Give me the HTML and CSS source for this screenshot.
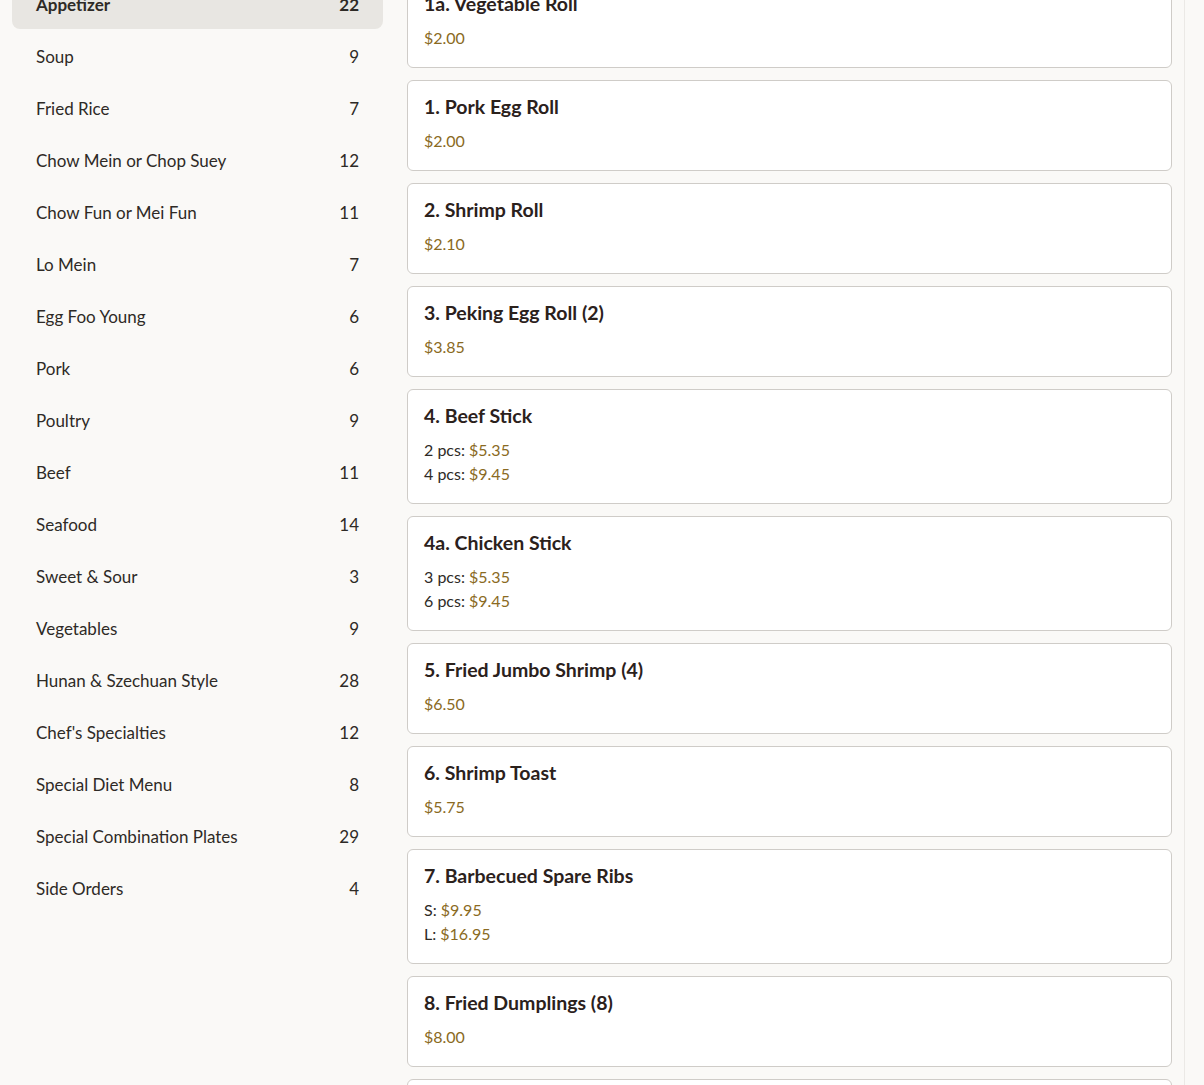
FILE: index.html
```
<!DOCTYPE html>
<html>
<head>
<meta charset="utf-8">
<link rel="stylesheet" href="styles.css">
</head>
<body>
<div class="page">
  <aside class="sidebar">
    <div class="cat active"><span>Appetizer</span><span>22</span></div>
    <div class="cat"><span>Soup</span><span>9</span></div>
    <div class="cat"><span>Fried Rice</span><span>7</span></div>
    <div class="cat"><span>Chow Mein or Chop Suey</span><span>12</span></div>
    <div class="cat"><span>Chow Fun or Mei Fun</span><span>11</span></div>
    <div class="cat"><span>Lo Mein</span><span>7</span></div>
    <div class="cat"><span>Egg Foo Young</span><span>6</span></div>
    <div class="cat"><span>Pork</span><span>6</span></div>
    <div class="cat"><span>Poultry</span><span>9</span></div>
    <div class="cat"><span>Beef</span><span>11</span></div>
    <div class="cat"><span>Seafood</span><span>14</span></div>
    <div class="cat"><span>Sweet &amp; Sour</span><span>3</span></div>
    <div class="cat"><span>Vegetables</span><span>9</span></div>
    <div class="cat"><span>Hunan &amp; Szechuan Style</span><span>28</span></div>
    <div class="cat"><span>Chef's Specialties</span><span>12</span></div>
    <div class="cat"><span>Special Diet Menu</span><span>8</span></div>
    <div class="cat"><span>Special Combination Plates</span><span>29</span></div>
    <div class="cat"><span>Side Orders</span><span>4</span></div>
  </aside>
  <main class="items">
    <div class="card"><div class="title">1a. Vegetable Roll</div><div class="line"><span class="price">$2.00</span></div></div>
    <div class="card"><div class="title">1. Pork Egg Roll</div><div class="line"><span class="price">$2.00</span></div></div>
    <div class="card"><div class="title">2. Shrimp Roll</div><div class="line"><span class="price">$2.10</span></div></div>
    <div class="card"><div class="title">3. Peking Egg Roll (2)</div><div class="line"><span class="price">$3.85</span></div></div>
    <div class="card"><div class="title">4. Beef Stick</div><div class="line">2 pcs: <span class="price">$5.35</span></div><div class="line">4 pcs: <span class="price">$9.45</span></div></div>
    <div class="card"><div class="title">4a. Chicken Stick</div><div class="line">3 pcs: <span class="price">$5.35</span></div><div class="line">6 pcs: <span class="price">$9.45</span></div></div>
    <div class="card"><div class="title">5. Fried Jumbo Shrimp (4)</div><div class="line"><span class="price">$6.50</span></div></div>
    <div class="card"><div class="title">6. Shrimp Toast</div><div class="line"><span class="price">$5.75</span></div></div>
    <div class="card"><div class="title">7. Barbecued Spare Ribs</div><div class="line">S: <span class="price">$9.95</span></div><div class="line">L: <span class="price">$16.95</span></div></div>
    <div class="card"><div class="title">8. Fried Dumplings (8)</div><div class="line"><span class="price">$8.00</span></div></div>
    <div class="card"><div class="title">9. Steamed Dumplings (8)</div><div class="line"><span class="price">$8.00</span></div></div>
  </main>
</div>
</body>
</html>
```
FILE: styles.css
```
html, body {
  margin: 0;
  padding: 0;
  background: #faf9f7;
  overflow: hidden;
}
body {
  font-family: "Lato", "Open Sans", sans-serif;
  color: #2b2520;
}
.page {
  display: flex;
  align-items: flex-start;
  gap: 24px;
  padding: 0 12px;
  margin-top: -23px;
  border-right: 1px solid #ebe9e6;
  box-sizing: content-box;
  width: 1160px;
  min-height: 1200px;
}
.sidebar {
  width: 371px;
  flex: none;
}
.cat {
  display: flex;
  justify-content: space-between;
  padding: 16px 24px 12px;
  line-height: 24px;
  font-size: 17px;
  color: #2e2a26;
  border-radius: 8px;
}
.cat.active {
  background: #e8e6e2;
  font-weight: 700;
}
.items {
  flex: 1;
  display: flex;
  flex-direction: column;
  gap: 12px;
}
.card {
  background: #fff;
  border: 1px solid #cfccc8;
  border-radius: 6px;
  padding: 14px 16px 17px;
}
.title {
  font-size: 19.5px;
  font-weight: 700;
  line-height: 24px;
  color: #2b211c;
  margin-bottom: 10px;
}
.line {
  font-size: 16px;
  line-height: 24px;
  color: #2e2a26;
}
.price {
  color: #8a6a22;
}
```
